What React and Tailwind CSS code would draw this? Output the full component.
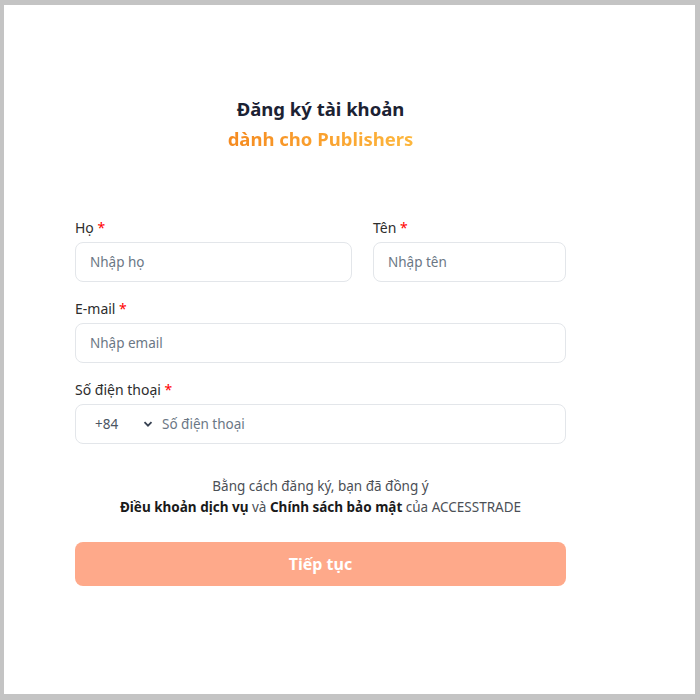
import React from "react";

const font = { fontFamily: "'Noto Sans', 'Open Sans', sans-serif" };

function Label({ children }) {
  return (
    <label className="block mb-[5px] text-[14px] leading-[18px] text-[#2d2d2d]">
      {children} <span className="text-[#ff0000]">*</span>
    </label>
  );
}

function Field({ label, placeholder }) {
  return (
    <div>
      <Label>{label}</Label>
      <input
        type="text"
        placeholder={placeholder}
        className="w-full h-10 px-[14px] rounded-lg border border-[#e3e6ea] text-[13.5px] text-[#333] placeholder:text-[#6b7785] outline-none"
      />
    </div>
  );
}

export default function App() {
  return (
    <div className="w-[700px] h-[700px] bg-[#c4c4c4] pt-[5px] pl-[4px] pr-[5px] pb-[6px]" style={font}>
      <div className="h-full bg-white pl-[71px] pr-[129px] pt-[91px]">
        <div className="text-center">
          <h1 className="text-[18.5px] leading-[26px] font-bold text-[#1c2233]">Đăng ký tài khoản</h1>
          <p className="mt-[4px] text-[18.5px] leading-[26px] font-bold bg-gradient-to-r from-[#f58a1f] to-[#fdb73d] bg-clip-text text-transparent inline-block">
            dành cho Publishers
          </p>
        </div>

        <form className="mt-[67px] flex flex-col gap-[18px]">
          <div className="grid grid-cols-[277px_1fr] gap-[21px]">
            <Field label="Họ" placeholder="Nhập họ" />
            <Field label="Tên" placeholder="Nhập tên" />
          </div>
          <Field label="E-mail" placeholder="Nhập email" />
          <div>
            <Label>Số điện thoại</Label>
            <div className="flex items-center h-10 rounded-lg border border-[#e3e6ea]">
              <div className="flex items-center w-[86px] pl-[19px] text-[13.5px] text-[#4b5563]">
                <span>+84</span>
                <svg className="ml-[25px]" width="10" height="10" viewBox="0 0 10 10">
                  <path d="M1.5 3.2 L5 6.7 L8.5 3.2" fill="none" stroke="#374151" strokeWidth="1.8" />
                </svg>
              </div>
              <input
                type="text"
                placeholder="Số điện thoại"
                className="flex-1 h-full text-[13.5px] text-[#333] placeholder:text-[#6b7785] outline-none bg-transparent"
              />
            </div>
          </div>

          <div className="mt-[14px] text-center text-[13.5px] leading-[21px] text-[#4b4f56]">
            <p>Bằng cách đăng ký, bạn đã đồng ý</p>
            <p>
              <b className="text-[#1a1a1a]">Điều khoản dịch vụ</b> và{" "}
              <b className="text-[#1a1a1a]">Chính sách bảo mật</b> của ACCESSTRADE
            </p>
          </div>

          <button
            type="button"
            className="h-[44px] mt-[6px] rounded-lg bg-[#fea98a] text-white font-bold text-[16px]"
          >
            Tiếp tục
          </button>
        </form>
      </div>
    </div>
  );
}
